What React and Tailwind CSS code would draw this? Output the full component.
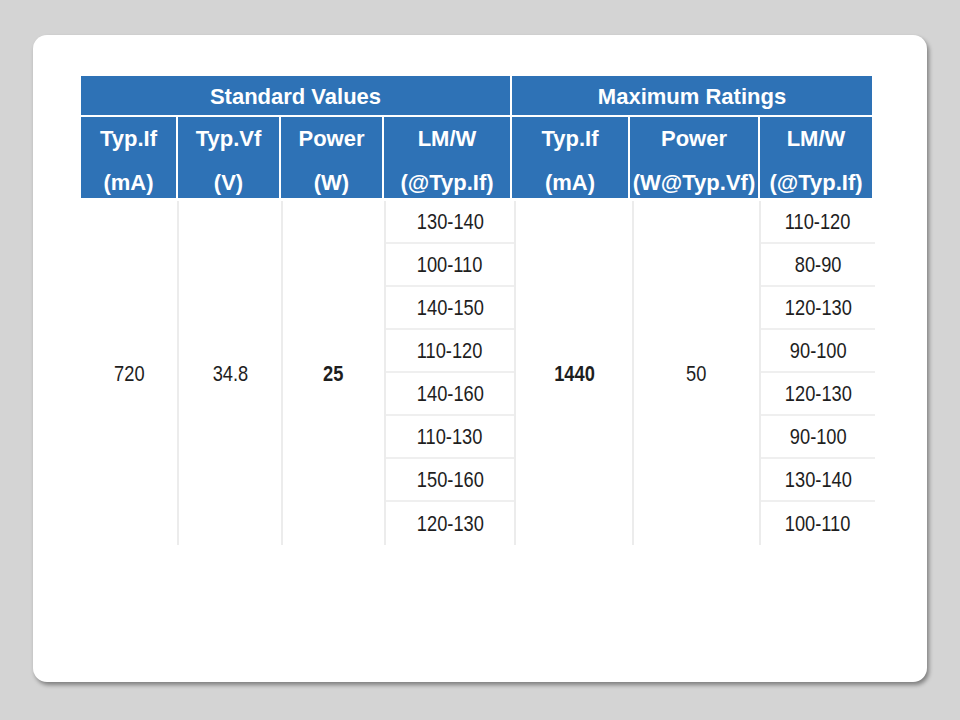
import React from "react";

const lmStd = ["130-140", "100-110", "140-150", "110-120", "140-160", "110-130", "150-160", "120-130"];
const lmMax = ["110-120", "80-90", "120-130", "90-100", "120-130", "90-100", "130-140", "100-110"];

function T({ children, bold }) {
  return (
    <span className={`inline-block scale-x-[0.83] ${bold ? "font-bold" : ""}`}>{children}</span>
  );
}

function H2({ w, a, b }) {
  return (
    <div className={`${w} bg-[#2e72b6] flex flex-col items-center justify-center pt-[6px] text-white font-bold text-[22px] leading-[44px] whitespace-nowrap`}>
      <span>{a}</span>
      <span>{b}</span>
    </div>
  );
}

function LmCol({ items, w, last }) {
  return (
    <div className={`${w} flex flex-col ${last ? "" : "border-r-2 border-[#ececec]"}`}>
      {items.map((t, i) => (
        <div
          key={i}
          className={`h-[43px] flex items-center justify-center ${i < items.length - 1 ? "border-b-2 border-[#efefef]" : ""}`}
        >
          <T>{t}</T>
        </div>
      ))}
    </div>
  );
}

export default function App() {
  return (
    <div className="w-[960px] h-[720px] bg-[#d4d4d4] pt-[35px] pl-[33px]" style={{ fontFamily: '"Liberation Sans", Arial, sans-serif' }}>
      <div className="w-[894px] h-[647px] bg-white rounded-[14px] shadow-[2px_3px_4px_rgba(0,0,0,0.4)] pt-[41px] pl-[48px]">
        {/* header row 1 */}
        <div className="flex gap-[2px] w-[791px]">
          <div className="w-[429px] h-[39px] pt-[2px] bg-[#2e72b6] flex items-center justify-center text-white font-bold text-[22px]">
            Standard Values
          </div>
          <div className="w-[360px] h-[39px] pt-[2px] bg-[#2e72b6] flex items-center justify-center text-white font-bold text-[22px]">
            Maximum Ratings
          </div>
        </div>
        {/* header row 2 */}
        <div className="flex gap-[2px] w-[791px] h-[81px] mt-[2px]">
          <H2 w="w-[95px]" a="Typ.If" b="(mA)" />
          <H2 w="w-[101px]" a="Typ.Vf" b="(V)" />
          <H2 w="w-[101px]" a="Power" b="(W)" />
          <H2 w="w-[126px]" a="LM/W" b="(@Typ.If)" />
          <H2 w="w-[116px]" a="Typ.If" b="(mA)" />
          <H2 w="w-[128px]" a="Power" b="(W@Typ.Vf)" />
          <H2 w="w-[112px]" a="LM/W" b="(@Typ.If)" />
        </div>
        {/* body */}
        <div className="flex mt-[2px] h-[345px] pt-[1px] text-[22px] text-[#1e1e1e]">
          <div className="w-[98px] border-r-2 border-[#ececec] flex items-center justify-center"><T>720</T></div>
          <div className="w-[104px] border-r-2 border-[#ececec] flex items-center justify-center"><T>34.8</T></div>
          <div className="w-[103px] border-r-2 border-[#ececec] flex items-center justify-center"><T bold>25</T></div>
          <LmCol items={lmStd} w="w-[130px]" />
          <div className="w-[118px] border-r-2 border-[#ececec] flex items-center justify-center"><T bold>1440</T></div>
          <div className="w-[127px] border-r-2 border-[#ececec] flex items-center justify-center"><T>50</T></div>
          <LmCol items={lmMax} w="w-[114px]" last />
        </div>
      </div>
    </div>
  );
}
